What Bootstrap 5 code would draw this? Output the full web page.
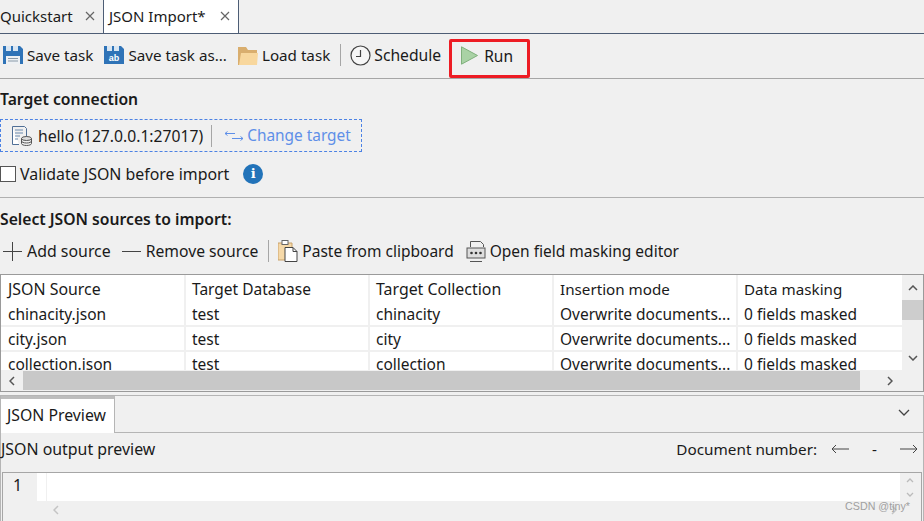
<!DOCTYPE html>
<html lang="en">
<head>
<meta charset="utf-8">
<title>JSON Import</title>
<link href="https://cdn.jsdelivr.net/npm/bootstrap@5.3.0/dist/css/bootstrap.min.css" rel="stylesheet">
<style>
html,body{height:521px;overflow:hidden}
body{background:#f0f0f0;color:#1a1a1a;font-family:"Noto Sans","Open Sans",sans-serif;font-size:15.5px;line-height:20px;position:relative}
svg{display:block;flex:none}
.fb{font-size:15.2px}.fc{font-size:15.9px}.fd{font-size:15.7px}
.tabbar{height:34px;border-bottom:1px solid #4d5d75;background:#f0f0f0;font-size:15px}
.tabitem{height:33px;padding-bottom:2px}
.tabfirst{width:103px}
.tabon{width:136px;background:#fff;border:1px solid #4d5d75;border-top:0;border-bottom:0;padding-left:5px}
.bar1{height:45px;border-bottom:1px solid #a6a6a6;padding-left:3px;padding-bottom:2px}
.tool{gap:4px;white-space:nowrap}
.toolclock{gap:3px}
.gap11{margin-right:11px}
.gap12{margin-right:12px}
.gap10{margin-right:10px}
.gap9{margin-right:9px}
.vsep{width:1px;height:22px;background:#a6a6a6;flex:none}
.runbox{border:3px solid #ed1c24;border-radius:2px;height:39px;width:81px;margin-left:8px;padding-left:9px;padding-bottom:5px;gap:6px;margin-top:6px}
.sect1{height:119px;border-bottom:1px solid #b0b0b0;padding-top:9px}
.heading{font-weight:600;height:22px;font-size:15.7px}
.connbox{width:362px;height:33px;margin-top:9px;border:1px dashed #4c82e4;padding-left:11px}
.connname{margin-left:6px;font-size:15.7px}
.connsep{margin-left:8px;margin-right:12px}
.changelink{color:#5e8fe8;gap:3px;font-size:15.4px}
.checkline{margin-top:12px;height:20px}
.cbox{width:16px;height:16px;border:1px solid #555;background:#fff;flex:none;margin-right:4px}
.infodot{width:20px;height:20px;border-radius:50%;background:#2273b9;color:#fff;font:700 13px/20px "DejaVu Serif",serif;text-align:center;margin-left:14px}
.sect2{height:76px;padding-top:10px}
.bar2{height:32px;margin-top:5px;padding-left:3px}
.tool6{gap:5px}
.gridbox{height:118px;border:1px solid #9a9a9a;background:#fff;display:flex;flex-wrap:wrap}
.gridview{width:901px;height:95px;overflow:hidden;background:#fff}
.gtable{border-collapse:separate;border-spacing:0;table-layout:fixed;width:921px}
.gtable th,.gtable td{width:184px;height:25px;padding:0 0 0 6px;font-weight:400;white-space:nowrap;overflow:hidden;border-right:2px solid #f0f0f0;border-bottom:2px solid #f0f0f0}
.gtable th{height:27px;border-bottom:0;padding-top:1px;font-size:15.2px}
.gtable th.fc{font-size:15.9px}
.gtable th.fbody{font-size:15.5px}
.gtable th:first-child,.gtable td:first-child{padding-left:7px;width:185px}
.gtable th:last-child,.gtable td:last-child{border-right:0}
.vscroll{width:21px;height:95px;background:#f0f0f0}
.vthumb{height:20px;background:#cdcdcd}
.arrowcell{height:25px}
.hscroll{width:100%;height:21px;background:#f0f0f0}
.harrow{width:22px;height:21px}
.harrowr{margin-right:22px}
.hthumb{width:837px;height:19px;background:#c8c8c8;flex:none}
.lowerpane{margin-top:3px;height:126px;border-top:1px solid #b5b5b5;border-left:1px solid #b5b5b5;border-right:1px solid #b5b5b5}
.ptabs{height:37px;border-bottom:1px solid #b5b5b5}
.ptab{width:114px;height:37px;background:#fff;border-right:1px solid #b5b5b5;border-top:3px solid #bdbdbd;padding-left:6px;padding-top:6px;font-size:15.8px}
.chev{margin-right:13px;margin-bottom:4px}
.ptitle{height:39px;padding-right:5px;padding-bottom:8px}
.ptitletext{font-size:15.9px}
.docnum{gap:14px;font-size:15.3px}
.docdash{margin:0 9px}
.editor{height:49px;border:1px solid #a6a6a6;border-bottom:0;margin-left:1px;margin-right:1px}
.gutter{width:34px;height:28px;background:#f0f0f0;padding-left:10px;padding-top:2px;font-size:16px}
.gutgap{width:10px;height:28px;background:#fff;border-right:1px solid #f0f0f0}
.codearea{height:28px;background:#fff;width:853px}
.minivs{width:21px;height:28px;padding-left:6px}
.edfoot{padding:4px 24px 0 50px}
.wmark{position:absolute;right:14px;bottom:8px;font:10.7px/14px "Liberation Sans",sans-serif;color:#a0a0a0}
</style>
</head>
<body>

<div class="tabbar d-flex">
  <div class="tabitem tabfirst d-flex align-items-center"><span>Quickstart</span>
    <svg width="10" height="10" viewBox="0 0 10 10" class="ms-auto me-2"><path d="M1 1l8 8M9 1l-8 8" stroke="#666" stroke-width="1.2"/></svg></div>
  <div class="tabitem tabon d-flex align-items-center"><span>JSON Import*</span>
    <svg width="10" height="10" viewBox="0 0 10 10" class="ms-auto me-2"><path d="M1 1l8 8M9 1l-8 8" stroke="#666" stroke-width="1.2"/></svg></div>
</div>

<div class="bar1 d-flex align-items-center">
  <div class="tool fb d-flex align-items-center gap11">
    <svg width="20" height="20" viewBox="0 0 20 20"><path d="M0 1h17l3 3v15H0z" fill="#2f73b7"/><rect x="3" y="1" width="5" height="5" fill="#d9e6f2"/><rect x="10" y="1" width="5" height="5" fill="#d9e6f2"/><rect x="3" y="11" width="14" height="8" fill="#eef1f4"/><path d="M5 13.500h10M5 16h10" stroke="#8a9aa8"/></svg>
    <span>Save task</span></div>
  <div class="tool fb d-flex align-items-center gap11">
    <svg width="20" height="20" viewBox="0 0 20 20"><path d="M0 1h17l3 3v15H0z" fill="#2f73b7"/><rect x="3" y="1" width="5" height="5" fill="#d9e6f2"/><rect x="10" y="1" width="5" height="5" fill="#d9e6f2"/><text x="10" y="16" text-anchor="middle" font-family="Liberation Sans" font-weight="700" font-size="9" fill="#fff">ab</text></svg>
    <span>Save task as...</span></div>
  <div class="tool fb d-flex align-items-center gap10">
    <svg width="20" height="21" viewBox="0 0 20 21"><path d="M0 2h8l2 3h9v15H0z" fill="#d9ae6e"/><path d="M3 8h17l-1 12H1z" fill="#f8d79d"/></svg>
    <span>Load task</span></div>
  <div class="vsep gap9"></div>
  <div class="tool toolclock fd d-flex align-items-center">
    <svg width="21" height="21" viewBox="0 0 21 21"><circle cx="10.500" cy="10.500" r="9.500" fill="#f7f7f7" stroke="#444" stroke-width="1.200"/><path d="M10.500 5v6.500H6" fill="none" stroke="#444" stroke-width="1.200"/></svg>
    <span>Schedule</span></div>
  <div class="runbox d-flex align-items-center">
    <svg width="17" height="19" viewBox="0 0 17 19"><path d="M0.500 0.800L16.500 9.500L0.500 18.200z" fill="#a9d2a5" stroke="#7fb07c"/></svg>
    <span>Run</span></div>
</div>

<div class="sect1">
  <div class="heading d-flex align-items-center">Target connection</div>
  <div class="connbox d-flex align-items-center">
    <svg width="20" height="20" viewBox="0 0 20 20"><path d="M.500.500h12l2 2V11" fill="none" stroke="#4f6f96"/><path d="M.500.500v18H7" fill="#fff" stroke="#4f6f96"/><path d="M3 4h8M3 7h8M3 10h5M3 13h3" stroke="#6a8aae"/><ellipse cx="14.500" cy="12.500" rx="5" ry="2" fill="#ddd" stroke="#555"/><path d="M9.500 12.500v5c0 1 2 2 5 2s5-1 5-2v-5M9.500 15c0 1 2 2 5 2s5-1 5-2" fill="none" stroke="#555"/></svg>
    <span class="connname">hello (127.0.0.1:27017)</span>
    <div class="vsep connsep"></div>
    <div class="changelink d-flex align-items-center">
      <svg width="20" height="10" viewBox="0 0 20 10"><path d="M11 2.500H1M3.500.500l-2.500 2 2.500 2M8 7.500h11M16.500 5.500l2.500 2-2.500 2" fill="none" stroke="#5e8fe8"/></svg>
      <span>Change target</span></div>
  </div>
  <div class="checkline d-flex align-items-center">
    <div class="cbox"></div><span class="fc">Validate JSON before import</span><div class="infodot">i</div>
  </div>
</div>

<div class="sect2">
  <div class="heading d-flex align-items-center">Select JSON sources to import:</div>
  <div class="bar2 d-flex align-items-center">
    <div class="tool tool6 d-flex align-items-center gap11">
      <svg width="19" height="19" viewBox="0 0 19 19"><path d="M9.500 0v19M0 9.500h19" stroke="#444"/></svg><span class="fc">Add source</span></div>
    <div class="tool tool6 d-flex align-items-center gap10">
      <svg width="19" height="19" viewBox="0 0 19 19"><path d="M0 9.500h19" stroke="#444"/></svg><span class="fd">Remove source</span></div>
    <div class="vsep gap9"></div>
    <div class="tool d-flex align-items-center gap12">
      <svg width="20" height="22" viewBox="0 0 20 22"><path d="M0 3h14v17H0z" fill="#f6d9a8" stroke="#c9a26a"/><rect x="4" y="0.500" width="6" height="4" fill="#fff" stroke="#666"/><path d="M7 7.500h8l4 4v10H7z" fill="#fff" stroke="#444"/><path d="M15 7.500v4h4" fill="none" stroke="#444"/></svg>
      <span>Paste from clipboard</span></div>
    <div class="tool d-flex align-items-center">
      <svg width="20" height="21" viewBox="0 0 20 21"><path d="M4.500 6V.500h10l3 3V6M4 20.500h12" fill="none" stroke="#555"/><rect x="1" y="7" width="18" height="10" fill="#ddd" stroke="#555"/><circle cx="5.500" cy="12" r="1.300" fill="#333"/><circle cx="10" cy="12" r="1.300" fill="#333"/><circle cx="14.500" cy="12" r="1.300" fill="#333"/></svg>
      <span>Open field masking editor</span></div>
  </div>
</div>

<div class="gridbox">
  <div class="gridview">
    <table class="gtable">
      <thead><tr><th class="fc">JSON Source</th><th class="fbody">Target Database</th><th class="fc">Target Collection</th><th>Insertion mode</th><th>Data masking</th></tr></thead>
      <tbody>
        <tr><td>chinacity.json</td><td>test</td><td>chinacity</td><td>Overwrite documents...</td><td>0 fields masked</td></tr>
        <tr><td>city.json</td><td>test</td><td>city</td><td>Overwrite documents...</td><td>0 fields masked</td></tr>
        <tr><td>collection.json</td><td>test</td><td>collection</td><td>Overwrite documents...</td><td>0 fields masked</td></tr>
      </tbody>
    </table>
  </div>
  <div class="vscroll d-flex flex-column">
    <div class="arrowcell d-flex align-items-center justify-content-center"><svg width="10" height="6" viewBox="0 0 10 6"><path d="M1 5l4-4 4 4" fill="none" stroke="#555" stroke-width="1.500"/></svg></div>
    <div class="vthumb"></div>
    <div class="arrowcell mt-auto d-flex align-items-center justify-content-center"><svg width="10" height="6" viewBox="0 0 10 6"><path d="M1 1l4 4 4-4" fill="none" stroke="#555" stroke-width="1.500"/></svg></div>
  </div>
  <div class="hscroll d-flex align-items-center">
    <div class="harrow d-flex align-items-center justify-content-center"><svg width="6" height="10" viewBox="0 0 6 10"><path d="M5 1L1 5l4 4" fill="none" stroke="#555" stroke-width="1.500"/></svg></div>
    <div class="hthumb"></div>
    <div class="harrow harrowr ms-auto d-flex align-items-center justify-content-center"><svg width="6" height="10" viewBox="0 0 6 10"><path d="M1 1l4 4-4 4" fill="none" stroke="#555" stroke-width="1.500"/></svg></div>
  </div>
</div>

<div class="lowerpane">
  <div class="ptabs d-flex">
    <div class="ptab">JSON Preview</div>
    <svg class="ms-auto chev align-self-center" width="12" height="7" viewBox="0 0 12 7"><path d="M1 1l5 5 5-5" fill="none" stroke="#444" stroke-width="1.300"/></svg>
  </div>
  <div class="ptitle d-flex align-items-center justify-content-between">
    <span class="ptitletext">JSON output preview</span>
    <div class="docnum d-flex align-items-center">
      <span>Document number:</span>
      <svg width="18" height="10" viewBox="0 0 18 10"><path d="M18 5H1M5 1L1 5l4 4" fill="none" stroke="#444"/></svg>
      <span class="docdash">-</span>
      <svg width="18" height="10" viewBox="0 0 18 10"><path d="M0 5h17M13 1l4 4-4 4" fill="none" stroke="#444"/></svg>
    </div>
  </div>
  <div class="editor">
    <div class="d-flex">
      <div class="gutter">1</div><div class="gutgap"></div><div class="codearea"></div>
      <div class="minivs d-flex flex-column justify-content-around"><svg width="8" height="5" viewBox="0 0 8 5"><path d="M1 4l3-3 3 3" fill="none" stroke="#bbb" stroke-width="1.300"/></svg><svg width="8" height="5" viewBox="0 0 8 5"><path d="M1 1l3 3 3-3" fill="none" stroke="#bbb" stroke-width="1.300"/></svg></div>
    </div>
    <div class="edfoot d-flex justify-content-between"><svg width="6" height="10" viewBox="0 0 6 10"><path d="M5 1L1 5l4 4" fill="none" stroke="#c4c4c4" stroke-width="1.500"/></svg><svg width="6" height="10" viewBox="0 0 6 10"><path d="M1 1l4 4-4 4" fill="none" stroke="#c4c4c4" stroke-width="1.500"/></svg></div>
  </div>
</div>
<div class="wmark">CSDN @tjny*</div>

<script src="https://cdn.jsdelivr.net/npm/bootstrap@5.3.0/dist/js/bootstrap.bundle.min.js"></script>
</body>
</html>
